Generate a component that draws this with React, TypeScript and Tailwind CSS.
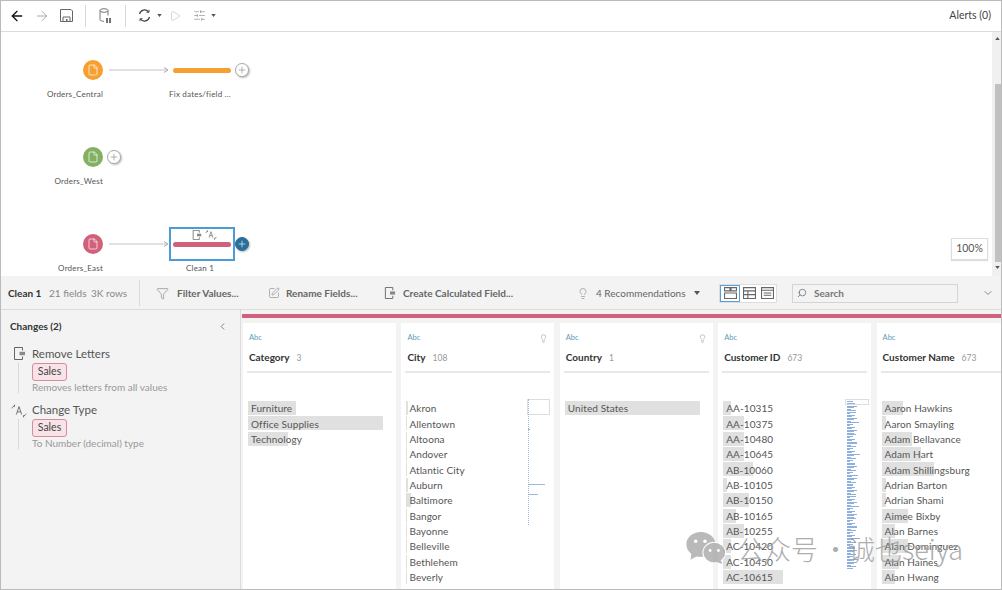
import { ArrowLeft, ArrowRight, Play, SlidersHorizontal, File, Plus, Filter, SquarePen, Lightbulb, Search, ChevronDown, ChevronLeft } from 'lucide-react';

const Caret = ({ className = '', up }: { className?: string; up?: boolean }) => (
  <svg width="5" height="3" viewBox="0 0 6 4" className={className}>
    <path d={up ? 'M0 4h6L3 0z' : 'M0 0h6L3 4z'} fill="#555" />
  </svg>
);

const SaveIcon = () => (
  <svg width="13" height="13" viewBox="0 0 13 13" fill="none" stroke="#666" strokeWidth="1">
    <path d="M.5.500h10.500l1.500 1.500v10.500H.5z" />
    <path d="M3 12.500V8h7v4.500" />
    <path d="M6 10h1.500v2.500H6z" fill="#666" stroke="none" />
  </svg>
);

const DataIcon = () => (
  <svg width="12" height="15" viewBox="0 0 12 15" fill="none" stroke="#777" strokeWidth="1">
    <ellipse cx="5" cy="2.500" rx="4" ry="1.800" />
    <path d="M1 2.500v9c0 1 1.500 1.800 4 1.800M9 2.500v5" />
    <path d="M8 10v5M11 10v5" stroke="#444" strokeWidth="1.500" />
  </svg>
);

const RefreshIcon = () => (
  <svg width="13" height="13" viewBox="0 0 13 13" fill="none" stroke="#444" strokeWidth="1.200">
    <path d="M1.500 5A5.200 5.200 0 0 1 10.500 2.800" />
    <path d="M11.500 8A5.200 5.200 0 0 1 2.500 10.200" />
    <path d="M11 .8v2.500H8.500M2 12.200V9.700h2.500" strokeWidth="0.900" />
  </svg>
);

const RemoveIcon = ({ size = 13 }: { size?: number }) => (
  <svg width={size} height={size} viewBox="0 0 13 13" fill="none" stroke="#666" strokeWidth="1">
    <path d="M9.500 3.500v-3h-8v12h8v-3" />
    <path d="M6.500 4.800h5.500v3.400H6.500z" fill="#888" stroke="none" />
  </svg>
);

const ChangeTypeIcon = ({ size = 16 }: { size?: number }) => (
  <svg width={size} height={size} viewBox="0 0 18 18" fill="none" stroke="#666" strokeWidth="1">
    <path d="M1 6c.6-1.500 1.500-2.300 3-2.500M3.800 1.800l.4 1.700-1.700.5" />
    <path d="M6 13L9 4l3 9M7 10h4" />
    <path d="M17 12c-.6 1.500-1.500 2.300-3 2.500M14.200 16.200l-.4-1.700 1.700-.5" />
  </svg>
);

const Node = ({ color, x, y }: { color: string; x: number; y: number }) => (
  <div
    className="absolute flex h-5 w-5 items-center justify-center rounded-full"
    style={{ left: x - 10, top: y - 10, backgroundColor: color }}
  >
    <File size={12} color="#fff" strokeWidth={1.4} />
  </div>
);

const AddButton = ({ x, y, active }: { x: number; y: number; active?: boolean }) => (
  <div
    className={`absolute flex h-[14px] w-[14px] items-center justify-center rounded-full border shadow-[1px_1px_2px_#bbb] ${
      active ? 'border-[#2a6f9b] bg-[#2a6f9b]' : 'border-[#aaa] bg-white'
    }`}
    style={{ left: x - 7, top: y - 7 }}
  >
    <Plus size={10} color={active ? '#fff' : '#888'} strokeWidth={1.5} />
  </div>
);

const Connector = ({ y }: { y: number }) => (
  <svg className="absolute" style={{ left: 109, top: y - 4 }} width="60" height="8" viewBox="0 0 60 8">
    <path d="M0 4h58" stroke="#c4c4c4" strokeWidth="1.200" />
    <path d="M55 1.500L59 4l-4 2.500" fill="none" stroke="#aaa" />
  </svg>
);

const Label = ({ text, right, center, y }: { text: string; right?: number; center?: number; y: number }) => (
  <div
    className="absolute text-[8px] leading-[10px] whitespace-nowrap tracking-[0.2px] text-[#555]"
    style={
      right !== undefined
        ? { right: 1002 - right, top: y - 5 }
        : { left: (center ?? 0) - 40, width: 80, textAlign: 'center', top: y - 5 }
    }
  >
    {text}
  </div>
);

const Toolbar = () => (
  <div className="flex h-[32px] shrink-0 items-center border-b border-[#dcdcdc] bg-white">
    <ArrowLeft size={16} color="#111" strokeWidth={2} className="ml-[9px]" />
    <ArrowRight size={16} color="#aaa" strokeWidth={1.5} className="ml-[9px]" />
    <div className="ml-[10px]"><SaveIcon /></div>
    <div className="ml-[12px] h-[22px] w-px bg-[#d8d8d8]" />
    <div className="ml-[13px]"><DataIcon /></div>
    <div className="ml-[14px] h-[22px] w-px bg-[#d8d8d8]" />
    <div className="ml-[12px]"><RefreshIcon /></div>
    <Caret className="ml-[6px]" />
    <Play size={12} color="#bbb" strokeWidth={1.2} className="ml-[7px]" />
    <SlidersHorizontal size={13} color="#888" strokeWidth={1.2} className="ml-[12px]" />
    <Caret className="ml-[5px]" />
    <span className="ml-auto mr-[11px] text-[10.500px] text-[#444]">Alerts (0)</span>
  </div>
);

const Canvas = () => (
  <div className="relative h-[244px] shrink-0 bg-white">
    <div className="relative top-[-32px]">
      <Node color="#f5a030" x={93} y={70} />
      <Connector y={70} />
      <div className="absolute left-[173px] top-[68px] h-[5px] w-[58px] rounded-full bg-[#f5a030]" />
      <AddButton x={242} y={70} />
      <Label text="Orders_Central" right={103} y={94} />
      <Label text="Fix dates/field ..." center={200} y={94} />

      <Node color="#84b062" x={93} y={157} />
      <AddButton x={114} y={157} />
      <Label text="Orders_West" right={103} y={181} />

      <Node color="#d1607a" x={93} y={244} />
      <Connector y={244} />
      <div className="absolute left-[169px] top-[227px] h-[34px] w-[66px] border-2 border-[#4d9bd5] bg-white" />
      <div className="absolute left-[192px] top-[229px] flex items-center gap-[3px]">
        <RemoveIcon size={10} />
        <ChangeTypeIcon size={12} />
      </div>
      <div className="absolute left-[173px] top-[242px] h-[5px] w-[58px] rounded-full bg-[#d1607a]" />
      <AddButton x={242} y={244} active />
      <Label text="Orders_East" right={103} y={268} />
      <Label text="Clean 1" center={200} y={268} />

      <div className="absolute left-[951px] top-[238px] flex h-[22px] w-[37px] items-center justify-center border border-[#ddd] bg-white text-[10.500px] text-[#555] shadow-[0_1px_1px_#ddd]">
        100%
      </div>
      <div className="absolute left-[992px] top-[32px] flex h-[244px] w-[10px] flex-col items-end bg-[#f0f0f0]">
        <Caret up className="mr-[2px] mt-[5px]" />
        <div className="mt-[44px] h-[178px] w-[7px] bg-[#c1c1c1]" />
        <Caret className="mr-[2px] mt-[4px]" />
      </div>
    </div>
  </div>
);

const ActionBar = () => (
  <div className="flex h-[34px] shrink-0 items-center border-b border-[#dcdcdc] bg-[#f3f3f3] pt-[1px] text-[10px] whitespace-nowrap text-[#666]">
    <span className="ml-[8px] w-[41px] font-bold text-[#333]">Clean 1</span>
    <span className="w-[42px] text-[#888]">21 fields</span>
    <span className="w-[48px] text-[#888]">3K rows</span>
    <div className="h-[26px] w-px bg-[#dcdcdc]" />
    <Filter size={13} color="#777" strokeWidth={1.1} className="ml-[16px] shrink-0" />
    <span className="ml-[8px] w-[91px] font-bold">Filter Values...</span>
    <SquarePen size={12} color="#777" strokeWidth={1.1} className="shrink-0" />
    <span className="ml-[6px] w-[98px] font-bold">Rename Fields...</span>
    <div className="shrink-0"><RemoveIcon size={12} /></div>
    <span className="ml-[7px] w-[174px] font-bold">Create Calculated Field...</span>
    <Lightbulb size={13} color="#777" strokeWidth={1.1} className="w-[12px] shrink-0" />
    <span className="ml-[7px] w-[98px]">4 Recommendations</span>
    <Caret className="h-[4px] w-[6px] shrink-0" />
    <div className="ml-[19px] flex h-[19px] w-[58px] shrink-0 border border-[#ddd] bg-white">
      <div className="flex w-[20px] items-center justify-center border border-[#5aa0d8]">
        <svg width="13" height="12" viewBox="0 0 12 11" fill="none" stroke="#666"><path d="M.5.500h5v3h-5zM6.500.500h5v3h-5zM.5 5.500h11v5H.5z" /></svg>
      </div>
      <div className="flex w-[19px] items-center justify-center">
        <svg width="13" height="12" viewBox="0 0 12 11" fill="none" stroke="#666"><path d="M.5.500h11v10H.5zM.5 3.500h11M.5 7h11M4.500 3.500v7" /></svg>
      </div>
      <div className="flex w-[17px] items-center justify-center">
        <svg width="13" height="12" viewBox="0 0 12 11" fill="none" stroke="#666"><path d="M.5.500h11v10H.5zM.5 3h11M2.500 5.500h7M2.500 7.500h7" /></svg>
      </div>
    </div>
    <div className="ml-[15px] flex h-[19px] w-[166px] shrink-0 items-center border border-[#d4d4d4]">
      <Search size={10} color="#777" className="ml-[4px] -scale-x-100" />
      <span className="ml-[7px] font-bold text-[#777]">Search</span>
    </div>
    <ChevronDown size={12} color="#888" className="ml-[24px] shrink-0" />
  </div>
);

const changes = [
  { title: 'Remove Letters', note: 'Removes letters from all values', type: false },
  { title: 'Change Type', note: 'To Number (decimal) type', type: true },
];

const ChangesPanel = () => (
  <div className="flex w-[241px] shrink-0 flex-col border-r border-[#dcdcdc] bg-[#f3f3f3]">
    <div className="mt-[9px] flex items-center justify-between pl-[10px] pr-[12px]">
      <span className="text-[10px] font-bold leading-[14px] text-[#333]">Changes (2)</span>
      <ChevronLeft size={11} color="#777" />
    </div>
    <div className="mt-[14px] flex flex-col gap-[10px]">
      {changes.map((c) => (
        <div key={c.title} className="relative pl-[32px]">
          <div className="absolute left-[11px] top-0 flex w-[16px] justify-center">
            {c.type ? <ChangeTypeIcon size={16} /> : <RemoveIcon size={13} />}
          </div>
          <div className="absolute bottom-0 left-[18px] top-[16px] w-px bg-[#d8d8d8]" />
          <div className="text-[11.500px] leading-[14px] text-[#555]">{c.title}</div>
          <div className="mt-[2px] flex h-[18px] w-[35px] items-center justify-center rounded-[3px] border border-[#d98a9d] bg-[#f8e3e8] text-[10.500px] text-[#444]">
            Sales
          </div>
          <div className="text-[10px] leading-[12px] text-[#999]">{c.note}</div>
        </div>
      ))}
    </div>
  </div>
);

type Row = { label: string; pct: number };

const idBars = Array.from({ length: 112 }, (_, i) => 3 + ((i * 37) % 8) + (i % 7 === 0 ? 3 : 0));

const columns: { name: string; count: string; bulb?: boolean; rows: Row[] }[] = [
  {
    name: 'Category',
    count: '3',
    rows: [
      { label: 'Furniture', pct: 48 },
      { label: 'Office Supplies', pct: 135 },
      { label: 'Technology', pct: 40 },
    ],
  },
  {
    name: 'City',
    count: '108',
    bulb: true,
    rows: [
      { label: 'Akron', pct: 2 },
      { label: 'Allentown', pct: 1 },
      { label: 'Altoona', pct: 1 },
      { label: 'Andover', pct: 1 },
      { label: 'Atlantic City', pct: 1 },
      { label: 'Auburn', pct: 2 },
      { label: 'Baltimore', pct: 5 },
      { label: 'Bangor', pct: 1 },
      { label: 'Bayonne', pct: 1 },
      { label: 'Belleville', pct: 1 },
      { label: 'Bethlehem', pct: 1 },
      { label: 'Beverly', pct: 1 },
    ],
  },
  { name: 'Country', count: '1', bulb: true, rows: [{ label: 'United States', pct: 135 }] },
  {
    name: 'Customer ID',
    count: '673',
    rows: [
      { label: 'AA-10315', pct: 8 },
      { label: 'AA-10375', pct: 21 },
      { label: 'AA-10480', pct: 21 },
      { label: 'AA-10645', pct: 21 },
      { label: 'AB-10060', pct: 30 },
      { label: 'AB-10105', pct: 4 },
      { label: 'AB-10150', pct: 26 },
      { label: 'AB-10165', pct: 13 },
      { label: 'AB-10255', pct: 21 },
      { label: 'AC-10420', pct: 8 },
      { label: 'AC-10450', pct: 8 },
      { label: 'AC-10615', pct: 60 },
    ],
  },
  {
    name: 'Customer Name',
    count: '673',
    rows: [
      { label: 'Aaron Hawkins', pct: 21 },
      { label: 'Aaron Smayling', pct: 4 },
      { label: 'Adam Bellavance', pct: 30 },
      { label: 'Adam Hart', pct: 39 },
      { label: 'Adam Shillingsburg', pct: 52 },
      { label: 'Adrian Barton', pct: 4 },
      { label: 'Adrian Shami', pct: 4 },
      { label: 'Aimee Bixby', pct: 26 },
      { label: 'Alan Barnes', pct: 13 },
      { label: 'Alan Dominguez', pct: 26 },
      { label: 'Alan Haines', pct: 17 },
      { label: 'Alan Hwang', pct: 13 },
    ],
  },
];

const CityOverview = () => (
  <div className="absolute left-[126px] top-[76px] h-[126px] w-[23px]">
    <div className="h-[16px] w-[23px] border border-[#ddd] bg-white" />
    <div className="absolute bottom-0 left-[1px] top-0 w-0 border-l border-dotted border-[#9db8dc]" />
    <div className="absolute left-[1px] top-[30px] h-px w-[2px] bg-[#9db8dc]" />
    <div className="absolute left-[1px] top-[85px] h-px w-[17px] bg-[#9db8dc]" />
    <div className="absolute left-[1px] top-[95px] h-px w-[10px] bg-[#9db8dc]" />
  </div>
);

const IdOverview = () => (
  <div className="absolute left-[127px] top-[76px] h-[173px] w-[24px] overflow-hidden">
    <div className="absolute left-0 top-0 h-[6px] w-[24px] border border-[#ddd]" />
    <div className="ml-[2px] mt-[2px] flex flex-col">
      {idBars.map((w, i) => (
        <div key={i} className="mb-[0.5px] h-[1px] shrink-0 bg-[#8fb0dc]" style={{ width: w }} />
      ))}
    </div>
  </div>
);

const Profile = () => (
  <div className="flex min-w-0 flex-1 flex-col bg-[#f3f3f3]">
    <div className="mt-[4px] ml-[1px] h-[4px] shrink-0 bg-[#d1607a]" />
    <div className="mt-[5px] flex min-h-0 flex-1 gap-[5.400px] overflow-hidden pl-[2px]">
      {columns.map((col) => (
        <div key={col.name} className="relative w-[153px] shrink-0 bg-white px-[4px]">
          <div className="mt-[9px] flex items-center justify-between pr-[2px] text-[7.500px] leading-[12px] text-[#5d9cb8]">
            <span className="ml-[2px]">Abc</span>
            {col.bulb && <Lightbulb size={9} color="#888" strokeWidth={1.3} />}
          </div>
          <div className="mt-[6px] flex h-[14px] items-baseline gap-[7px] pl-[2px]">
            <span className="text-[10px] font-bold leading-[14px] text-[#333]">{col.name}</span>
            <span className="text-[8.500px] text-[#999]">{col.count}</span>
          </div>
          <div className="mt-[7px] h-[2px] bg-[#e8e8e8]" />
          <div className="ml-[1px] mt-[28px] flex flex-col">
            {col.rows.map((r) => (
              <div key={r.label} className="relative flex h-[15.360px] items-center">
                <div className="absolute left-0 top-0 h-[14px] bg-[#e0e0e0]" style={{ width: r.pct }} />
                <span className="relative ml-[3px] text-[10px] tracking-[0.1px] text-[#555]">{r.label}</span>
              </div>
            ))}
          </div>
          {col.name === 'City' && <CityOverview />}
          {col.name === 'Customer ID' && <IdOverview />}
        </div>
      ))}
    </div>
  </div>
);

const Watermark = () => (
  <div className="pointer-events-none absolute left-[686px] top-[532px] flex items-center text-[#9a9a9a] opacity-80">
    <svg width="40" height="33" viewBox="0 0 38 32" fill="#a8a8a8">
      <ellipse cx="14" cy="12" rx="14" ry="12" />
      <path d="M5 20l-1 7 7-4z" />
      <ellipse cx="27" cy="20" rx="11" ry="10" stroke="#fff" strokeWidth="1" />
      <path d="M33 27l2 4-6-2z" />
      <circle cx="9" cy="9" r="1.700" fill="#fff" />
      <circle cx="18" cy="9" r="1.700" fill="#fff" />
      <circle cx="23" cy="18" r="1.400" fill="#fff" />
      <circle cx="31" cy="18" r="1.400" fill="#fff" />
    </svg>
    <span className="ml-[11px] whitespace-nowrap font-['Noto_Sans_CJK_SC',sans-serif] text-[27px] font-light leading-[32px]">
      公众号<span className="ml-[4px] mr-[-1px]">·</span>诚也seiya
    </span>
  </div>
);

export default function App() {
  return (
    <div className="relative flex h-[590px] w-[1002px] flex-col overflow-hidden bg-white font-['Lato',sans-serif]">
      <Toolbar />
      <Canvas />
      <ActionBar />
      <div className="flex min-h-0 flex-1">
        <ChangesPanel />
        <Profile />
      </div>
      <Watermark />
      <div className="pointer-events-none absolute inset-0 border border-[#bbb]" />
    </div>
  );
}
